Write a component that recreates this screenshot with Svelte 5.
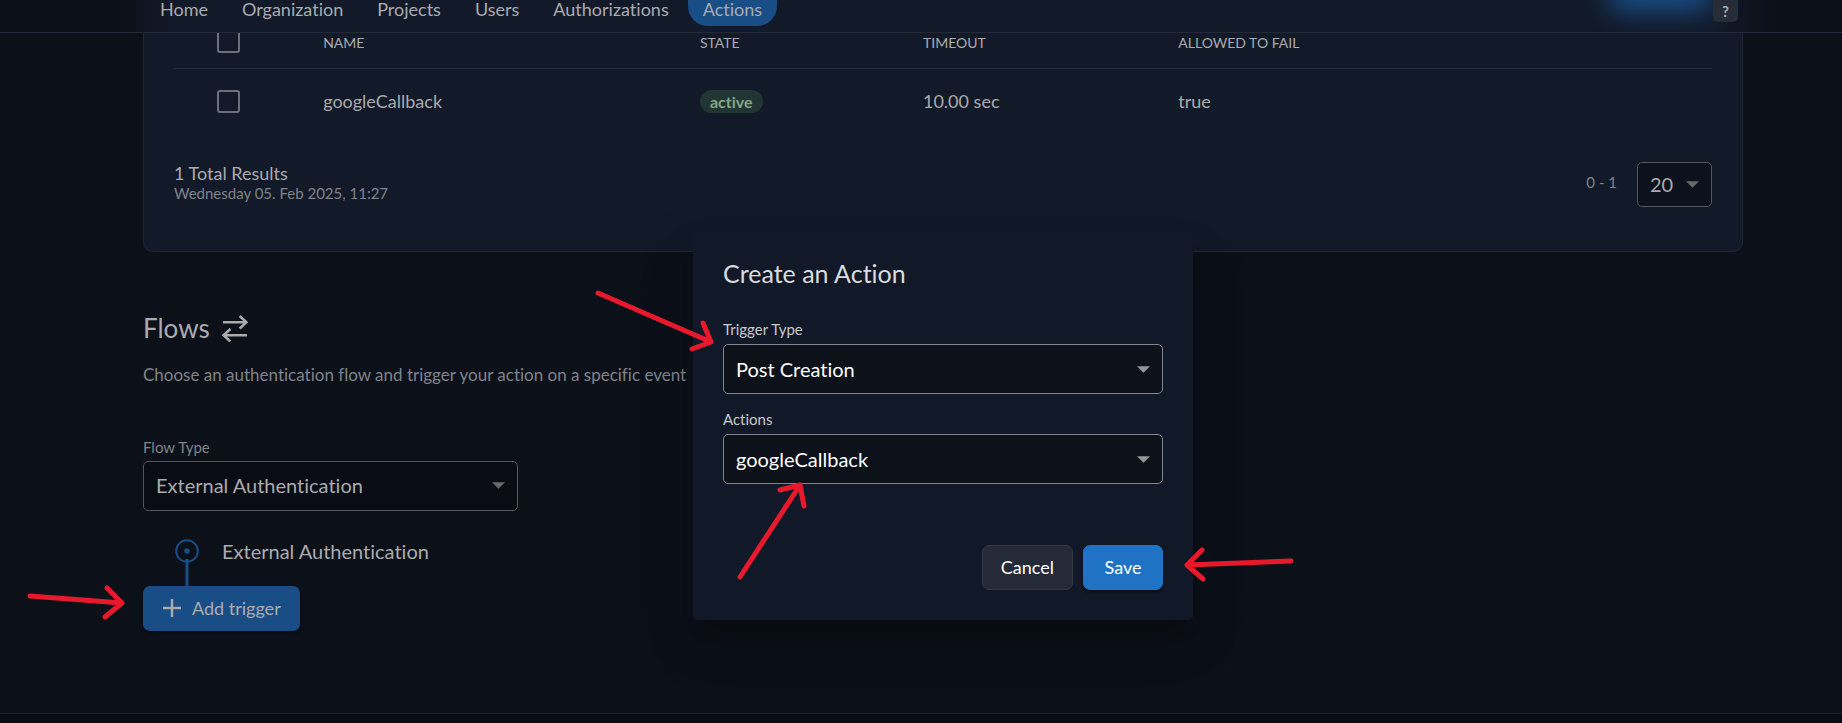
<script>
  const nav = ['Home', 'Organization', 'Projects', 'Users', 'Authorizations', 'Actions'];
  const rows = [{ name: 'googleCallback', state: 'active', timeout: '10.00 sec', fail: 'true' }];
  const arrows = [
    'M30 596 L122 603 M107 588 L122 603 L105 617',
    'M598 293 L711 342 M703 323 L711 342 L692 349',
    'M740 577 L800 485 M780 490 L800 485 L804 506',
    'M1291 561 L1187 565 M1202 550 L1187 565 L1203 579'
  ];
</script>

<div class="page">
  <header>
    <nav>
      {#each nav as item}
        <a href="#{item}" class:current={item === 'Actions'}>{item}</a>
      {/each}
    </nav>
    <div class="tools">
      <span class="glow"></span>
      <button class="help" type="button">?</button>
    </div>
  </header>

  <main>
    <section class="card">
      <table>
        <colgroup><col class="c1" /><col class="c2" /><col class="c3" /><col class="c4" /><col /></colgroup>
        <thead>
          <tr>
            <th><input type="checkbox" aria-label="Select all" /></th>
            <th>NAME</th>
            <th>STATE</th>
            <th>TIMEOUT</th>
            <th>ALLOWED TO FAIL</th>
          </tr>
        </thead>
        <tbody>
          {#each rows as row}
            <tr>
              <td><input type="checkbox" aria-label={row.name} /></td>
              <td>{row.name}</td>
              <td><span class="state">{row.state}</span></td>
              <td>{row.timeout}</td>
              <td>{row.fail}</td>
            </tr>
          {/each}
        </tbody>
      </table>
      <div class="paginator">
        <div class="results">
          <span class="total">1 Total Results</span>
          <span class="time">Wednesday 05. Feb 2025, 11:27</span>
        </div>
        <span class="range">0 - 1</span>
        <div class="select small">
          <select aria-label="Page size"><option>20</option></select>
          <svg viewBox="0 0 12 6"><path d="M0 0h12L6 6z" /></svg>
        </div>
      </div>
    </section>

    <section class="flows">
      <h2>
        Flows
        <svg viewBox="0 0 25 26"><path d="M1 7H23M17 1L23.500 7L17 13M24 19.500H2M8 13.500L1.500 19.500L8 25.500" /></svg>
      </h2>
      <p>Choose an authentication flow and trigger your action on a specific event</p>
      <label for="flow">Flow Type</label>
      <div class="select flow">
        <select id="flow"><option>External Authentication</option></select>
        <svg viewBox="0 0 12 6"><path d="M0 0h12L6 6z" /></svg>
      </div>
      <div class="step">
        <svg viewBox="0 0 24 47">
          <circle cx="12" cy="12" r="10.800" />
          <circle class="dot" cx="12" cy="12" r="2.800" />
          <path d="M12 20V47" />
        </svg>
        <span>External Authentication</span>
      </div>
      <button class="add" type="button">
        <svg viewBox="0 0 20 20"><path d="M10 1V19M1 10H19" /></svg>
        Add trigger
      </button>
    </section>
  </main>
  <footer></footer>

  <div class="dialog" role="dialog" aria-labelledby="dialog-title">
    <h1 id="dialog-title">Create an Action</h1>
    <label for="trigger">Trigger Type</label>
    <div class="select">
      <select id="trigger"><option>Post Creation</option></select>
      <svg viewBox="0 0 12 6"><path d="M0 0h12L6 6z" /></svg>
    </div>
    <label for="actions">Actions</label>
    <div class="select">
      <select id="actions"><option>googleCallback</option></select>
      <svg viewBox="0 0 12 6"><path d="M0 0h12L6 6z" /></svg>
    </div>
    <div class="buttons">
      <button class="cancel" type="button">Cancel</button>
      <button class="save" type="button">Save</button>
    </div>
  </div>

  <svg class="arrows" width="1842" height="723" aria-hidden="true">
    {#each arrows as d}
      <path {d} />
    {/each}
  </svg>
</div>

<style>
  :global(body) {
    margin: 0;
    background: #0c1019;
  }
  .page {
    position: relative;
    min-height: 100vh;
    display: flex;
    flex-direction: column;
    overflow: hidden;
    background: #0c1019;
    color: #ababae;
    font-family: Lato, sans-serif;
    font-size: 18px;
    font-variant-ligatures: none;
    line-height: 24px;
  }
  * {
    box-sizing: border-box;
  }
  button,
  select {
    font-family: inherit;
    font-variant-ligatures: none;
  }
  header {
    position: relative;
    z-index: 1;
    display: flex;
    justify-content: space-between;
    overflow: hidden;
    height: 33px;
    padding: 0 104px 0 145px;
    border-bottom: 1px solid #232936;
    background: linear-gradient(90deg, #0c1019 120px, #121928 170px, #121928 calc(100% - 125px), #0c1019 calc(100% - 70px));
  }
  nav {
    display: flex;
    gap: 4px;
    height: 26px;
  }
  nav a {
    display: flex;
    align-items: flex-end;
    padding: 0 15px 8px;
    color: inherit;
    line-height: 18px;
    text-decoration: none;
  }
  nav a.current {
    border-radius: 0 0 20px 20px;
    background: #184d85;
  }
  .tools {
    display: flex;
    gap: 10px;
  }
  .glow {
    width: 85px;
    height: 10px;
    margin-top: -12px;
    box-shadow: 0 3px 28px 8px #1b5a9e;
  }
  .help {
    position: relative;
    width: 25px;
    height: 22px;
    padding: 0;
    border: 0;
    border-radius: 0 0 5px 5px;
    background: #262c38;
    color: #ababae;
    font-size: 15px;
    font-weight: 700;
  }
  main {
    flex: 1;
    padding: 0 99px 0 143px;
  }
  .card {
    margin-top: -15px;
    padding: 0 30px 44px;
    border: 1px solid #212835;
    border-radius: 10px;
    background: #121928;
  }
  table {
    width: 100%;
    border-collapse: collapse;
    table-layout: fixed;
    text-align: left;
  }
  .c1 { width: 9.7%; }
  .c2 { width: 24.5%; }
  .c3 { width: 14.5%; }
  .c4 { width: 16.6%; }
  th {
    height: 49px;
    padding: 0 0 15px;
    border-bottom: 1px solid #252c38;
    font-size: 14px;
    font-weight: 400;
    line-height: 20px;
    vertical-align: bottom;
  }
  td {
    height: 67px;
    padding: 0 0 1px;
  }
  th:first-child,
  td:first-child {
    padding-left: 43px;
  }
  input {
    display: block;
    appearance: none;
    width: 23px;
    height: 23px;
    margin: 0;
    border: 2px solid #6d7078;
    border-radius: 3px;
  }
  .state {
    display: inline-block;
    padding: 0 10px;
    border-radius: 12px;
    background: #213634;
    color: #86a687;
    font-size: 16px;
    font-weight: 700;
    line-height: 23px;
  }
  .paginator {
    display: flex;
    align-items: center;
    margin-top: 27px;
  }
  .results {
    display: grid;
    flex: 1;
    padding-bottom: 5px;
  }
  .total {
    line-height: 22px;
  }
  .time,
  .range,
  label {
    color: #818389;
    font-size: 15px;
    line-height: 18px;
  }
  .range {
    margin-right: 20px;
    padding-bottom: 5px;
  }
  .select {
    position: relative;
    height: 50px;
  }
  .select select {
    appearance: none;
    width: 100%;
    height: 100%;
    padding: 0 30px 0 12px;
    border: 1px solid #81848b;
    border-radius: 5px;
    background: #0d111a;
    color: #fff;
    font-size: 20px;
  }
  .select svg {
    position: absolute;
    top: 50%;
    right: 13px;
    width: 13px;
    height: 7px;
    margin-top: -3px;
    fill: #94969c;
    pointer-events: none;
  }
  .small {
    width: 75px;
    height: 45px;
  }
  .small select,
  .flow select {
    padding-bottom: 2px;
    border-color: #54565b;
    background: #090c14;
    color: #ababae;
  }
  .small select {
    background: #0c111b;
  }
  .small svg,
  .flow svg {
    margin-top: -4px;
    fill: #68696d;
  }
  .flows {
    display: flex;
    flex-direction: column;
    align-items: flex-start;
    padding-top: 60px;
  }
  h2 {
    display: flex;
    align-items: center;
    gap: 12px;
    margin: 0;
    font-size: 26px;
    font-weight: 400;
    line-height: 32px;
  }
  h2 svg {
    width: 26px;
    height: 27px;
  }
  h2 svg,
  .add svg {
    fill: none;
    stroke: currentColor;
    stroke-width: 2.400;
  }
  p {
    margin: 18px 0 50px;
    color: #818389;
    font-size: 17px;
    line-height: 26px;
  }
  .flow {
    width: 375px;
    margin-top: 5px;
  }
  .step {
    display: flex;
    align-items: flex-start;
    gap: 23px;
    margin-top: 28px;
    padding-left: 32px;
    font-size: 20px;
    line-height: 24px;
  }
  .step svg {
    width: 24px;
    height: 47px;
    fill: none;
    stroke: #184d85;
    stroke-width: 2;
  }
  .step path {
    stroke-width: 3;
  }
  .step .dot {
    fill: #184d85;
    stroke: none;
  }
  .add {
    display: flex;
    align-items: center;
    gap: 10px;
    height: 45px;
    padding: 0 19px 1px;
    border: 0;
    border-radius: 7px;
    background: #184d85;
    box-shadow: 0 2px 3px rgba(0, 0, 0, 0.4);
    color: #ababae;
    font-size: 18px;
  }
  .add svg {
    width: 20px;
    height: 20px;
  }
  footer {
    height: 10px;
    border-top: 1px solid #1b202b;
    background: #090c14;
  }
  .dialog {
    position: absolute;
    top: 231px;
    left: calc(50% + 22px);
    width: 500px;
    padding: 26px 30px 30px;
    border-radius: 5px;
    background: #111827;
    box-shadow: 0 14px 19px -9px rgba(0, 0, 0, 0.2), 0 30px 48px 4px rgba(0, 0, 0, 0.12), 0 14px 58px 6px rgba(0, 0, 0, 0.08);
    transform: translateX(-50%);
  }
  h1 {
    margin: 0 0 31px;
    color: #d9dbde;
    font-size: 25px;
    font-weight: 400;
    line-height: 32px;
  }
  .dialog label {
    display: block;
    margin: 0 0 6px;
    color: #c7c9cd;
  }
  .dialog .select + label {
    margin-top: 16px;
  }
  .buttons {
    display: flex;
    justify-content: flex-end;
    gap: 10px;
    margin-top: 61px;
  }
  .buttons button {
    min-width: 80px;
    height: 45px;
    padding: 0 18px 1px;
    border: 1px solid #303642;
    border-radius: 7px;
    background: #242a37;
    color: #fff;
    font-size: 18px;
  }
  .buttons .save {
    border-color: #2073c4;
    background: #2073c4;
    box-shadow: 0 2px 3px rgba(0, 0, 0, 0.4);
  }
  .arrows {
    position: absolute;
    top: 0;
    left: 0;
    fill: none;
    stroke: #e8192c;
    stroke-width: 5;
    stroke-linecap: round;
    stroke-linejoin: round;
    pointer-events: none;
  }
</style>
